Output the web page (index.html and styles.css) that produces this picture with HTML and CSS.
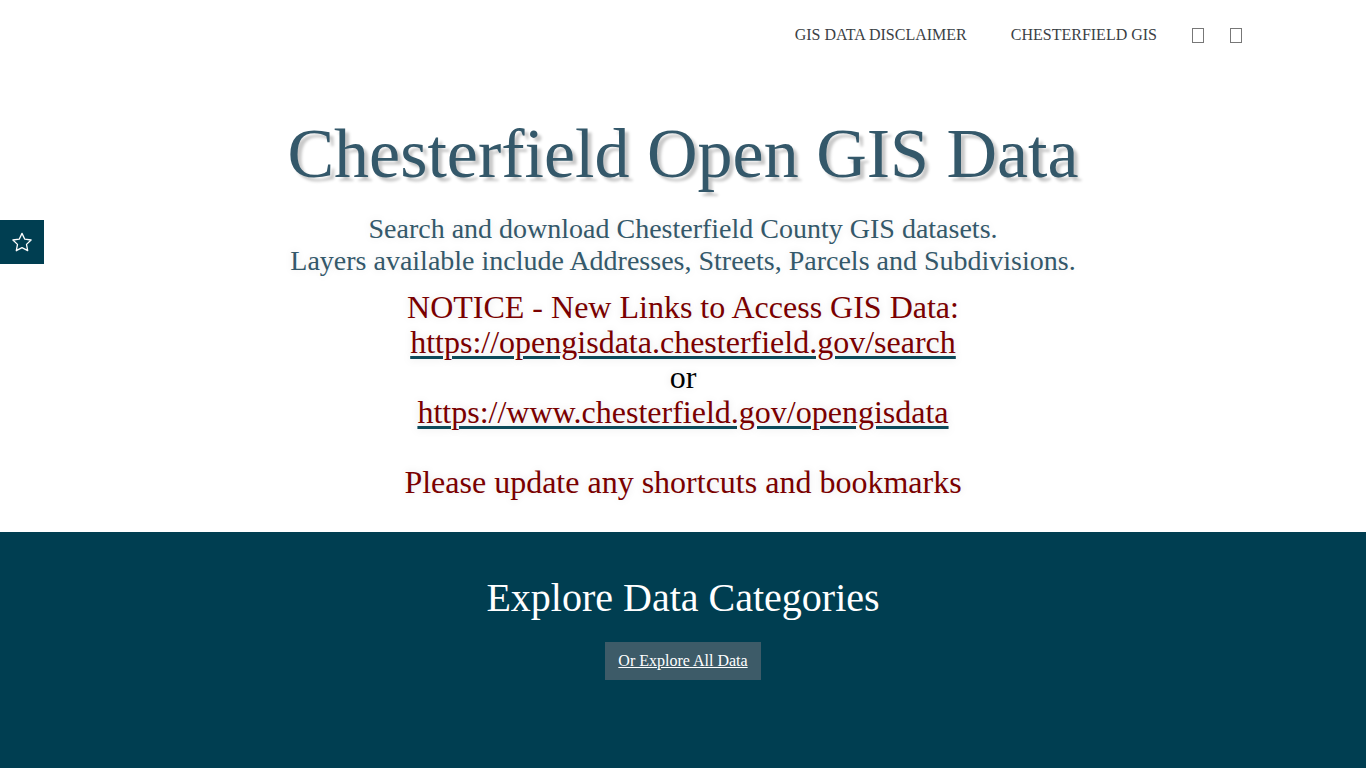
FILE: index.html
```html
<!DOCTYPE html>
<html lang="en">
<head>
<meta charset="utf-8">
<title>Chesterfield Open GIS Data</title>
<link rel="stylesheet" href="styles.css">
</head>
<body>
<header class="topnav">
  <nav class="navlinks">
    <a class="navlink" href="#">GIS DATA DISCLAIMER</a>
    <a class="navlink last" href="#">CHESTERFIELD GIS</a>
    <span class="tofu"></span>
    <span class="tofu"></span>
  </nav>
</header>
<button class="fav" aria-label="Favorites">
  <svg width="24" height="24" viewBox="0 0 24 24" fill="none" stroke="#fff" stroke-width="1.3" stroke-linejoin="round"><path d="M12 3.4l2.8 5.8 6.3.8-4.6 4.4 1.2 6.3L12 17.7l-5.7 3 1.2-6.3-4.6-4.4 6.3-.8z"/></svg>
</button>
<main>
  <section class="hero">
    <h1 class="title">Chesterfield Open GIS Data</h1>
    <p class="subtitle">Search and download Chesterfield County GIS datasets.<br>Layers available include Addresses, Streets, Parcels and Subdivisions.</p>
    <div class="notice">
      <div>NOTICE - New Links to Access GIS Data:</div>
      <div><a class="nlink" href="#">https://opengisdata.chesterfield.gov/search</a></div>
      <div class="or">or</div>
      <div><a class="nlink" href="#">https://www.chesterfield.gov/opengisdata</a></div>
      <div>&nbsp;</div>
      <div>Please update any shortcuts and bookmarks</div>
    </div>
  </section>
  <section class="explore">
    <h2 class="explore-title">Explore Data Categories</h2>
    <a class="explore-btn" href="#">Or Explore All Data</a>
  </section>
</main>
</body>
</html>
```
FILE: styles.css
```css
html, body {
  margin: 0;
  padding: 0;
  background: #fff;
  font-family: "Liberation Serif", "Times New Roman", serif;
}
.topnav {
  height: 70px;
  display: flex;
  justify-content: flex-end;
  align-items: center;
  padding-right: 124px;
}
.navlinks {
  display: flex;
  align-items: center;
}
.navlink {
  color: #3b3f45;
  text-decoration: none;
  font-size: 16px;
  margin-right: 44px;
}
.navlink.last { margin-right: 35px; }
.tofu {
  display: inline-block;
  width: 12px;
  height: 15px;
  border: 1px solid #777;
  box-sizing: border-box;
  margin-right: 26px;
}
.tofu:last-child { margin-right: 0; }
.fav {
  position: absolute;
  left: 0;
  top: 220px;
  width: 44px;
  height: 44px;
  background: #003e51;
  border: none;
  padding: 0;
  display: flex;
  align-items: center;
  justify-content: center;
}
.hero {
  text-align: center;
  padding-top: 44px;
  height: 418px;
}
.title {
  margin: 0;
  font-weight: normal;
  font-size: 70px;
  line-height: 80px;
  color: #34586a;
  text-shadow: 4px 4px 3px #c8c8c8;
}
.subtitle {
  margin: 19px 0 0;
  font-size: 28px;
  line-height: 32px;
  color: #34586a;
  text-shadow: 0 0 8px #e6e6e6;
}
.notice {
  margin-top: 13px;
  font-size: 32px;
  line-height: 35px;
  color: #7a0000;
  text-shadow: 0 0 8px #e2e2e2;
}
.nlink {
  color: #7a0000;
  text-decoration: underline;
  text-decoration-color: #0c4a5a;
  text-decoration-thickness: 3px;
  text-underline-offset: 3px;
}
.or { color: #000; }
.explore {
  background: #003e51;
  height: 236px;
  text-align: center;
  padding-top: 1px;
}
.explore-title {
  margin: 43px 0 0;
  font-weight: normal;
  font-size: 40px;
  line-height: 44px;
  color: #fff;
}
.explore-btn {
  display: inline-block;
  margin-top: 22px;
  background: #3d5b68;
  color: #fff;
  font-size: 16px;
  line-height: 38px;
  padding: 0 13px;
  text-decoration: underline;
}
```
